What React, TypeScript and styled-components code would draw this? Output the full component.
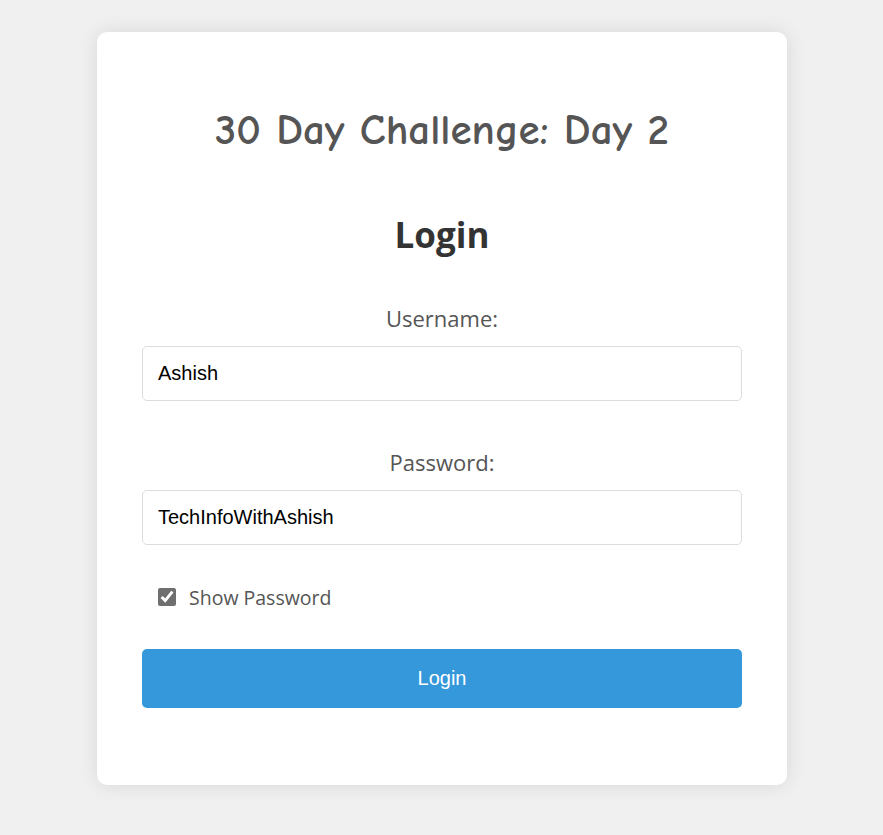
import * as React from 'react';
import styled, { createGlobalStyle } from 'styled-components';

const GlobalStyle = createGlobalStyle`
    html, body {
        margin: 0;
        padding: 0;
        background: #f0f0f0;
    }
    * {
        box-sizing: border-box;
    }
`

export default function App() {
    const [username, setUsername] = React.useState('Ashish')
    const [password, setPassword] = React.useState('TechInfoWithAshish')
    const [showPassword, setShowPassword] = React.useState(true)

    return (
    <Page>
        <GlobalStyle />
        <Card>
            <Title>30 Day Challenge: Day 2</Title>
            <Heading>Login</Heading>
            <Field>
                <Label htmlFor="username">Username:</Label>
                <TextInput
                    id="username"
                    type="text"
                    value={username}
                    onChange={e => setUsername(e.target.value)}
                />
            </Field>
            <Field>
                <Label htmlFor="password">Password:</Label>
                <TextInput
                    id="password"
                    type={showPassword ? 'text' : 'password'}
                    value={password}
                    onChange={e => setPassword(e.target.value)}
                />
            </Field>
            <CheckRow>
                <Checkbox
                    type="checkbox"
                    checked={showPassword}
                    onChange={e => setShowPassword(e.target.checked)}
                />
                <span>Show Password</span>
            </CheckRow>
            <SubmitButton type="button">Login</SubmitButton>
        </Card>
    </Page>
    )
}

const uiFont = `"Open Sans", "Noto Sans", sans-serif`

const Page = styled.div`
    display: flex;
    justify-content: center;
    padding: 32px 0 51px 1px;
`
const Card = styled.div`
    width: 690px;
    background: #fff;
    border-radius: 10px;
    box-shadow: 0 0 20px rgba(0, 0, 0, 0.1);
    padding: 74px 45px 77px;
    display: flex;
    flex-direction: column;
`
const Title = styled.h1`
    margin: 0;
    font-family: "Comic Sans MS", "Comic Neue", "DejaVu Sans", cursive;
    font-size: 43px;
    font-weight: bold;
    line-height: 48px;
    color: #555;
    text-align: center;
`
const Heading = styled.h2`
    margin: 59px 0 0;
    font-family: ${uiFont};
    font-size: 35px;
    font-weight: bold;
    line-height: 44px;
    color: #333;
    text-align: center;
`
const Field = styled.div`
    display: flex;
    flex-direction: column;
    gap: 14px;
    margin-top: 47px;
    & + & {
        margin-top: 47px;
    }
`
const Label = styled.label`
    font-family: ${uiFont};
    font-size: 22px;
    line-height: 28px;
    color: #555;
    text-align: center;
`
const TextInput = styled.input`
    width: 100%;
    height: 55px;
    padding: 0 15px;
    border: 1px solid #ddd;
    border-radius: 5px;
    font-family: "Liberation Sans", Arial, sans-serif;
    font-size: 20px;
    color: #000;
    outline: none;
`
const CheckRow = styled.label`
    display: flex;
    align-items: center;
    gap: 13px;
    margin-top: 38px;
    padding-left: 16px;
    height: 28px;
    font-family: ${uiFont};
    font-size: 19.5px;
    color: #555;
`
const Checkbox = styled.input`
    width: 18px;
    height: 18px;
    margin: 0;
    accent-color: #6f6f6f;
`
const SubmitButton = styled.button`
    margin-top: 38px;
    height: 59px;
    border: none;
    border-radius: 5px;
    background: #3498db;
    color: #fff;
    font-family: "Liberation Sans", Arial, sans-serif;
    font-size: 20px;
    cursor: pointer;
`
